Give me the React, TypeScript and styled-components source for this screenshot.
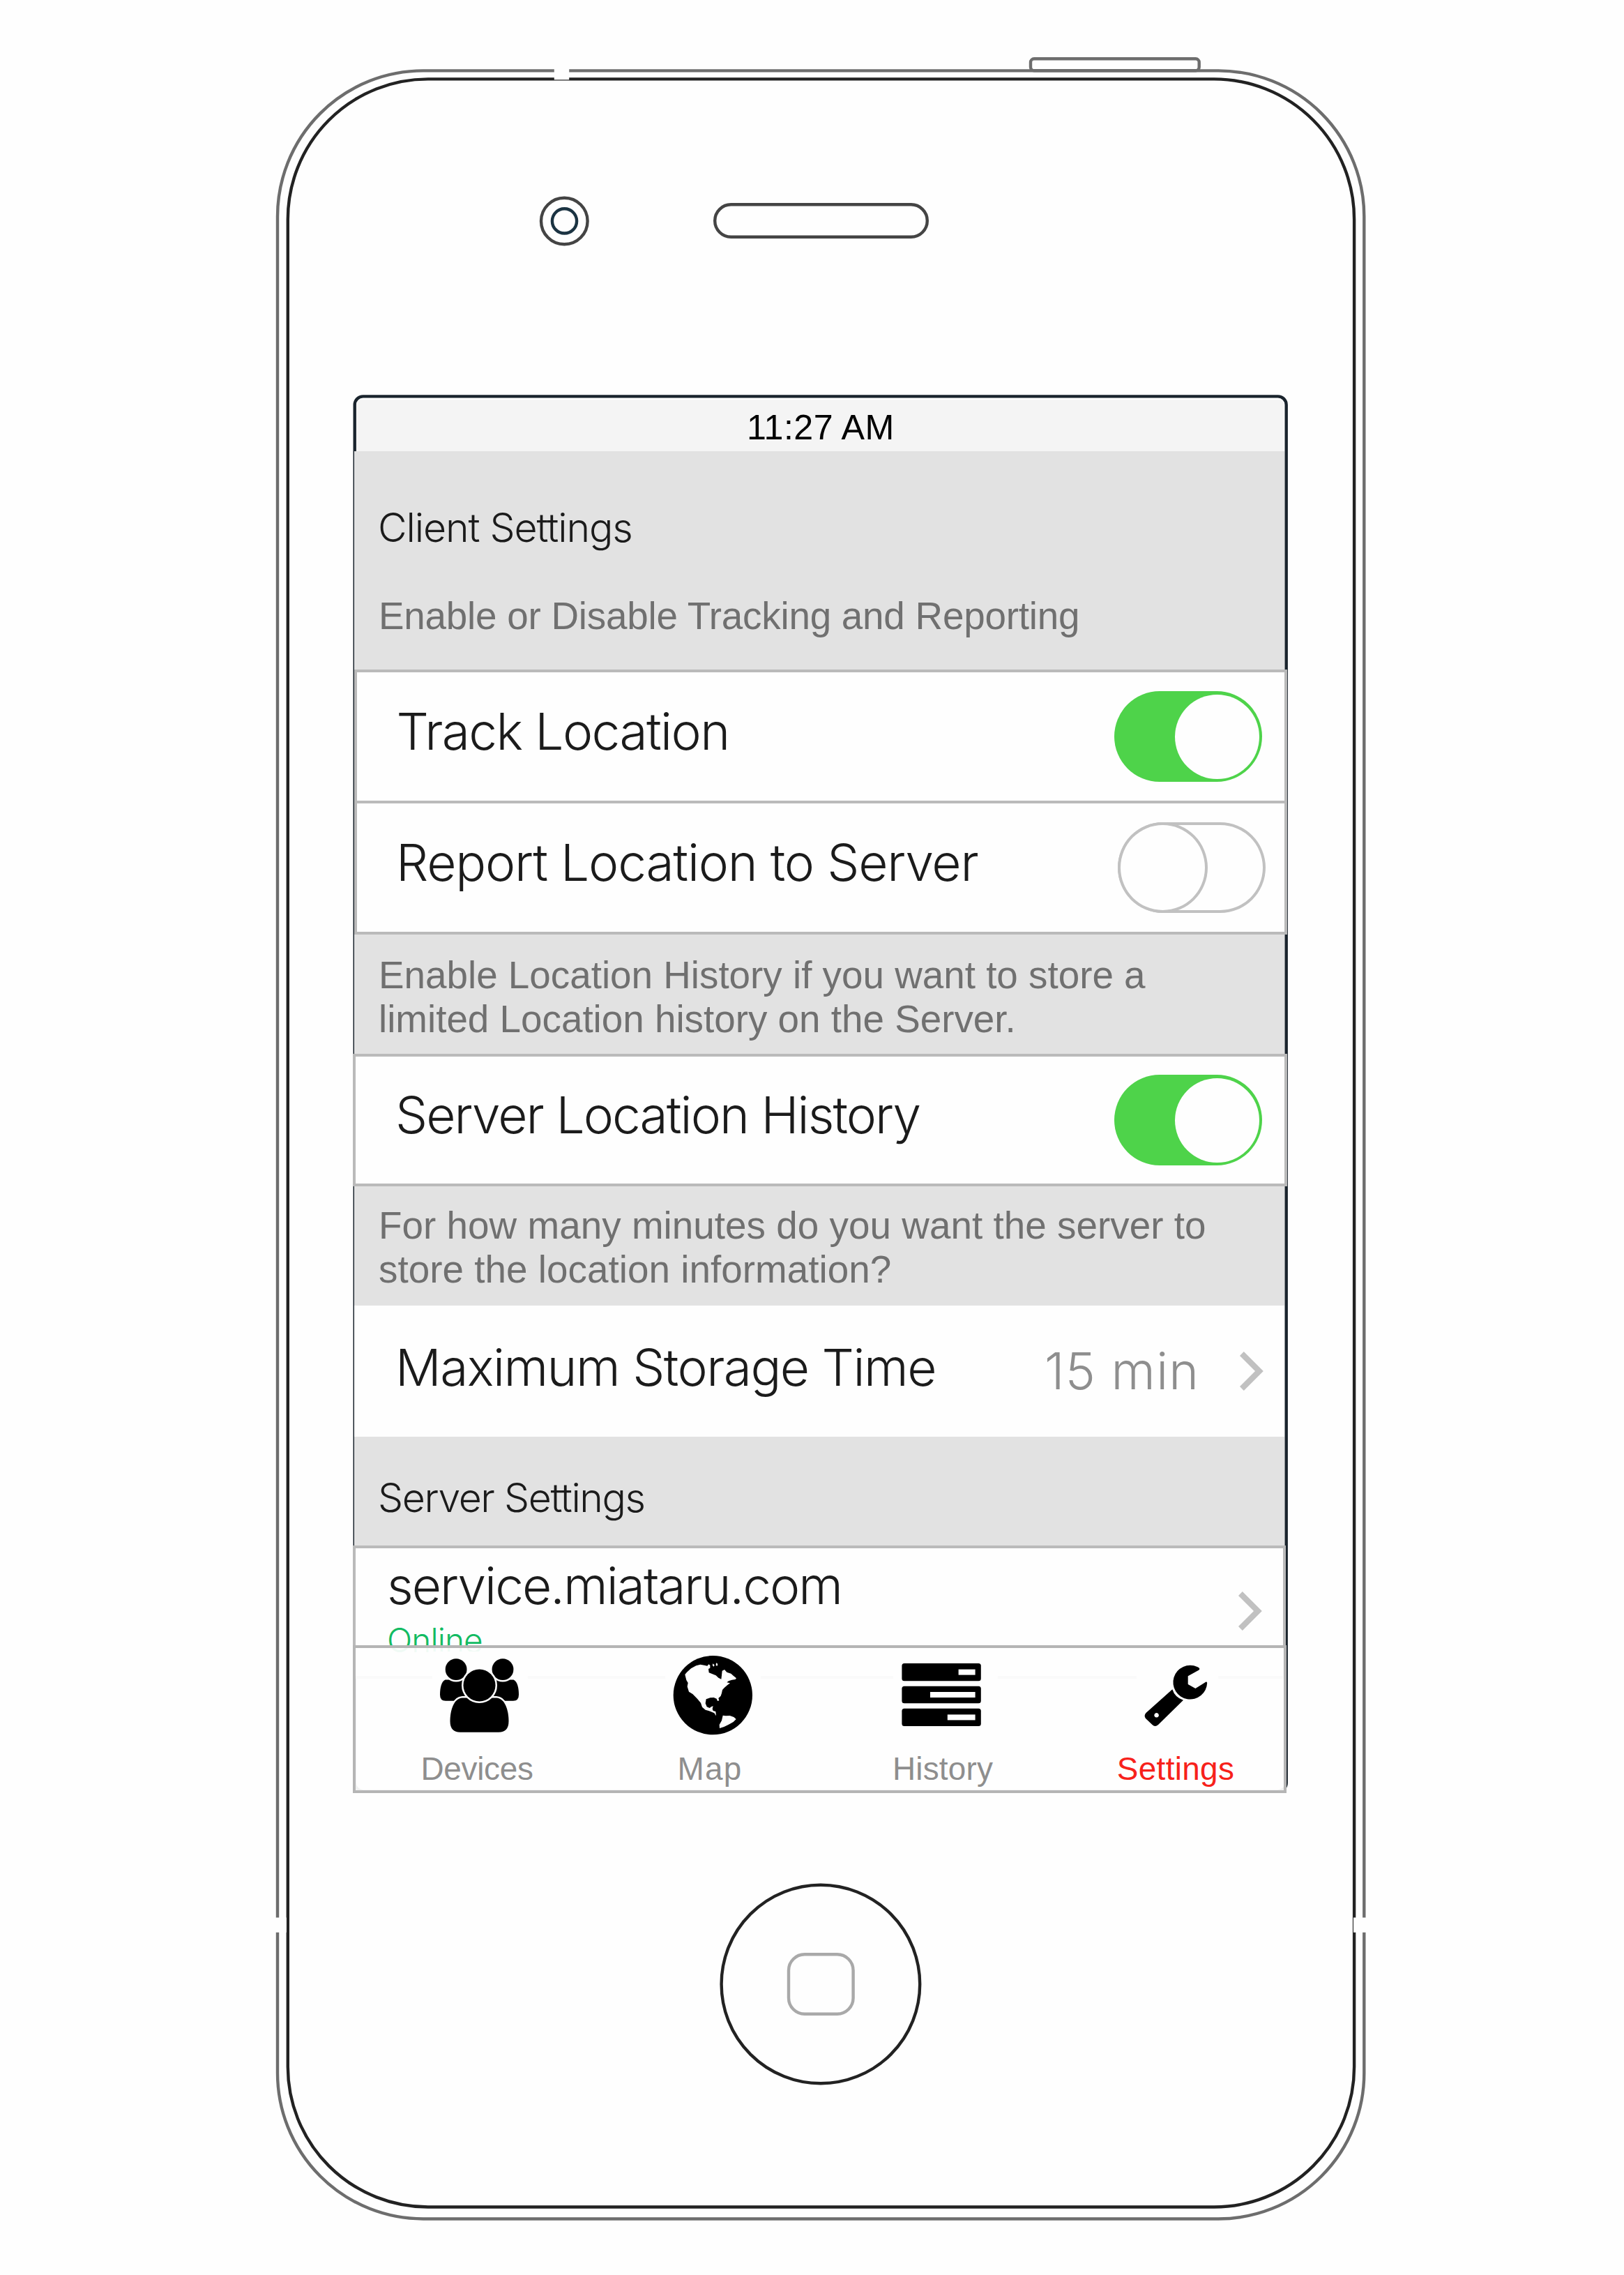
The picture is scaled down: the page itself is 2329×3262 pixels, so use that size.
import React from "react";
import styled, { createGlobalStyle } from "styled-components";

const line = "#bababa";
const sans = `"Liberation Sans", Arial, Helvetica, sans-serif`;
const light = `Inter, "Liberation Sans", sans-serif`;

const GlobalStyle = createGlobalStyle`
  * { box-sizing: border-box; }
  body { margin: 0; background: #fefefe; }
`;

const Stage = styled.main`
  display: grid;
  width: 2329px;
  height: 3262px;
  overflow: hidden;
  background: #fefefe;
`;

const ChassisDrawing = styled.svg`
  grid-area: 1 / 1;
  display: block;
  fill: none;
  stroke-width: 4.4;
`;

const Screen = styled.section`
  grid-area: 1 / 1;
  z-index: 1;
  display: flex;
  flex-direction: column;
  width: 1334px;
  height: 1998px;
  margin: 573px 0 0 508px;
`;

const StatusBar = styled.header`
  flex: none;
  height: 74px;
  margin: 0 1px 0 3px;
  padding-left: 560px;
  border-radius: 7px 7px 0 0;
  background: #f4f4f4;
  color: #000;
  font: 400 50.2px/81px ${sans};
  letter-spacing: 0.43px;
  white-space: pre;
`;

const Band = styled.div<{ $height: number; $top: number }>`
  flex: none;
  height: ${(p) => p.$height}px;
  padding: ${(p) => p.$top}px 0 0 34px;
  background: #e2e2e2;
`;

const Heading = styled.h2<{ $spacing: number }>`
  margin: 0;
  color: #1b1b1b;
  font: 300 57.2px/80px ${light};
  letter-spacing: ${(p) => p.$spacing}px;
`;

const Hint = styled.p<{ $gap?: number; $spacing?: number }>`
  margin: ${(p) => p.$gap ?? 0}px 0 0 1px;
  color: #707070;
  font: 400 54.8px/63.2px ${sans};
  letter-spacing: ${(p) => p.$spacing ?? 0}px;
  white-space: nowrap;
`;

const Group = styled.div<{ $left: number; $right: number }>`
  flex: none;
  display: flex;
  flex-direction: column;
  margin: 0 -${(p) => p.$right}px 0 -${(p) => p.$left}px;
  border: 4px solid ${line};
  background: #fefefe;
`;

const Divider = styled.div`
  height: 4px;
  background: ${line};
`;

const Row = styled.div<{ $height: number; $left: number; $right: number }>`
  flex: none;
  display: flex;
  align-items: center;
  justify-content: space-between;
  height: ${(p) => p.$height}px;
  padding: 0 ${(p) => p.$right}px 0 ${(p) => p.$left}px;
  background: #fefefe;
`;

const Label = styled.span<{ $spacing: number; $lift?: number }>`
  padding-bottom: ${(p) => p.$lift ?? 15}px;
  color: #1b1b1b;
  font: 300 73px/90px ${light};
  letter-spacing: ${(p) => p.$spacing}px;
  white-space: nowrap;
`;

const Value = styled.span`
  width: 280px;
  margin-left: auto;
  color: #8e8e8e;
  font: 300 72.6px/90px ${light};
  letter-spacing: 1.19px;
  white-space: nowrap;
`;

const Track = styled.span<{ $on: boolean }>`
  display: flex;
  justify-content: ${(p) => (p.$on ? "flex-end" : "flex-start")};
  width: 212px;
  height: 130px;
  padding: ${(p) => (p.$on ? "4.5px 4px" : "0")};
  border-radius: 65px;
  background: ${(p) => (p.$on ? "#4ed34a" : "#fefefe")};
  box-shadow: ${(p) => (p.$on ? "none" : "inset 0 0 0 4px #c1c1c1")};
`;

const Knob = styled.span<{ $on: boolean }>`
  width: ${(p) => (p.$on ? 121 : 129)}px;
  height: ${(p) => (p.$on ? 121 : 130)}px;
  border: ${(p) => (p.$on ? "none" : "4px solid #c1c1c1")};
  border-radius: 50%;
  background: #fefefe;
`;

const ServerRow = styled(Group)`
  flex-direction: row;
  justify-content: space-between;
  align-items: flex-start;
  height: 191px;
  margin-bottom: -48px;
  padding: 8.5px 30px 0 45px;
`;

const ServerText = styled.div`
  display: flex;
  flex-direction: column;
`;

const Online = styled.span`
  margin-top: 3px;
  color: #12bb62;
  font: 300 47.7px/60px ${light};
  letter-spacing: -0.89px;
`;

const ChevronDrawing = styled.svg<{ $top?: number }>`
  flex: none;
  display: block;
  width: 34px;
  height: 56px;
  margin-top: ${(p) => p.$top ?? 0}px;
  fill: #c1c1c1;
`;

const TabBar = styled.nav`
  z-index: 1;
  flex: none;
  display: grid;
  grid-template-columns: repeat(4, 334px);
  height: 212px;
  margin: 0 -3px 0 -2px;
  padding-left: 7px;
  border: 4px solid #b5b5b5;
  background: rgba(254, 254, 254, 0.94);
`;

const Tab = styled.div`
  display: flex;
  flex-direction: column;
  align-items: center;
  padding-top: 5px;
`;

const IconBox = styled.span<{ $width: number; $shift: number }>`
  display: block;
  width: ${(p) => p.$width}px;
  height: 122px;
  margin-left: ${(p) => p.$shift * 2}px;
  background: #fefefe;

  svg {
    display: block;
    width: 100%;
    height: 100%;
  }
`;

const TabLabel = styled.span<{ $active?: boolean; $spacing: number }>`
  margin-top: 15.8px;
  color: ${(p) => (p.$active ? "#f7211b" : "#8e8e8e")};
  font: 400 45.9px/60px ${sans};
  letter-spacing: ${(p) => p.$spacing}px;
`;

function Chassis() {
  return (
    <ChassisDrawing width="2329" height="3262" viewBox="0 0 2329 3262">
      <rect x="1478" y="84.3" width="241.7" height="17" rx="5" stroke="#6d6d6d" />
      <rect x="398" y="101.4" width="1558.3" height="3080.1" rx="209" stroke="#6d6d6d" />
      <rect x="412.8" y="113.4" width="1529.3" height="3051.1" rx="201" stroke="#222" />
      <g fill="#fefefe">
        <rect x="794.8" y="96" width="21.4" height="18.3" />
        <rect x="392" y="2749.5" width="18.8" height="21.3" />
        <rect x="1941" y="2749.5" width="20" height="21.3" />
      </g>
      <circle cx="809.3" cy="317" r="33.3" stroke="#444" />
      <circle cx="809.5" cy="316.9" r="17.6" stroke="#1b3342" />
      <rect x="1025.2" y="293.3" width="304.6" height="46.5" rx="23.2" stroke="#444" />
      <circle cx="1176.9" cy="2845" r="142.3" stroke="#222" />
      <rect x="1131" y="2802.3" width="92.6" height="85.4" rx="23" stroke="#a9a9a9" />
      <rect x="508.7" y="568.4" width="1336" height="2000" rx="12" stroke="#1a242d" />
    </ChassisDrawing>
  );
}

function Toggle({ on }: { on: boolean }) {
  return (
    <Track $on={on}>
      <Knob $on={on} />
    </Track>
  );
}

function Chevron({ top }: { top?: number }) {
  return (
    <ChevronDrawing $top={top} viewBox="0 0 34 56">
      <path d="M0 6 L5.8 0 L33.8 28 L5.8 56 L0 50 L22 28 Z" />
    </ChevronDrawing>
  );
}

function DevicesIcon() {
  return (
    <svg viewBox="-5 -2 137 122">
      <path d="M13.5 38.5 C8 41 6 50 6 60 Q6 68.7 14 68.7 H44 V38.5 Z" />
      <path d="M111.5 38.5 C117 41 119 50 119 60 Q119 68.7 111 68.7 H81 V38.5 Z" />
      <g stroke="#fefefe" strokeWidth="5" paintOrder="stroke">
        <ellipse cx="29.1" cy="23.7" rx="15.4" ry="15.4" />
        <ellipse cx="96" cy="23.7" rx="15.4" ry="15.4" />
        <path d="M38 64.5 C26 65 20.5 82 20.5 98 Q20.5 113.7 35 113.7 H90 Q104.5 113.7 104.5 98 C104.5 82 99 65 87 64.5 Z" />
        <circle cx="62.5" cy="46.4" r="23" />
      </g>
    </svg>
  );
}

function GlobeIcon() {
  return (
    <svg viewBox="-3 9 411 366">
      <circle cx="202" cy="197" r="170" />
      <g fill="#fefefe">
        <path d="M82 108 L90 98 L108 82 L130 70 L148 65 L165 68 L178 71 L184 64 L190 68 L190 80 L183 84 L185 100 L200 106 L215 112 L226 122 L238 128 L240 112 L242 92 L252 87 L262 98 L280 104 L290 113 L303 124 L299 129 L284 131 L270 136 L262 142 L276 145 L264 154 L252 164 L243 174 L240 188 L236 200 L226 210 L229 220 L222 222 L218 212 L206 207 L190 208 L173 214 L170 232 L176 247 L188 252 L196 246 L203 244 L200 256 L203 264 L214 267 L216 286 L208 274 L190 266 L170 260 L156 248 L150 230 L135 212 L115 192 L99 182 L92 160 L95 144 L88 132 Z" />
        <path d="M201 61 l8 6 l-3 7 l-5 -4 Z M216 58 l7 4 l-2 9 l-6 -2 Z" />
        <path d="M245 284 L258 286 L275 285 L292 291 L302 300 L290 312 L270 323 L250 333 L231 339 L230 324 L240 306 Z" />
      </g>
    </svg>
  );
}

function HistoryIcon() {
  return (
    <svg viewBox="0 0 150 122">
      <rect x="12.4" y="17" width="113.4" height="25.2" rx="3.5" />
      <rect x="12.4" y="49.7" width="113.4" height="24.5" rx="3.5" />
      <rect x="12.4" y="81.7" width="113.4" height="25.2" rx="3.5" />
      <g fill="#fefefe">
        <rect x="93.6" y="25.6" width="24" height="8" />
        <rect x="53" y="58" width="64.6" height="8" />
        <rect x="77.8" y="90.4" width="39.8" height="8" />
      </g>
    </svg>
  );
}

function WrenchIcon() {
  return (
    <svg viewBox="-11 -20 117 122">
      <path d="M62.7 15.3 L78.5 6.6 Q81 4 76 2 A24.4 24.4 0 1 0 90.2 25 Q89.5 22.5 87 24.5 L73.4 33 L62.7 27 Z" />
      <path
        fillRule="evenodd"
        d="M40.3 34.3 Q44 46 56 49.7 L20 85 Q15.5 89 11.5 85 L2 76 Q-1 72 2.5 68 Z M17.6 68 a3.3 3.3 0 1 0 0.01 0 Z"
      />
    </svg>
  );
}

export default function App() {
  return (
    <>
      <GlobalStyle />
      <Stage>
        <Chassis />
        <Screen>
          <StatusBar>11:27 AM</StatusBar>

          <Band $height={313} $top={69.5}>
            <Heading $spacing={-1.11}>Client Settings</Heading>
            <Hint $gap={55.7} $spacing={-0.23}>
              Enable or Disable Tracking and Reporting
            </Hint>
          </Band>

          <Group $left={0} $right={4}>
            <Row $height={184} $left={56.5} $right={32}>
              <Label $spacing={-1.62}>Track Location</Label>
              <Toggle on />
            </Row>
            <Divider />
            <Row $height={184} $left={56} $right={27}>
              <Label $spacing={-1.21}>Report Location to Server</Label>
              <Toggle on={false} />
            </Row>
          </Group>

          <Band $height={171} $top={27}>
            <Hint>
              Enable Location History if you want to store a
              <br />
              limited Location history on the Server.
            </Hint>
          </Band>

          <Group $left={2} $right={4}>
            <Row $height={182} $left={57} $right={32}>
              <Label $spacing={-1.95}>Server Location History</Label>
              <Toggle on />
            </Row>
          </Group>

          <Band $height={170.5} $top={25}>
            <Hint $spacing={0.04}>
              For how many minutes do you want the server to
              <br />
              store the location information?
            </Hint>
          </Band>

          <Row $height={188} $left={59} $right={30}>
            <Label $spacing={-1.54} $lift={9.6}>
              Maximum Storage Time
            </Label>
            <Value>15 min</Value>
            <Chevron />
          </Row>

          <Band $height={156.5} $top={48}>
            <Heading $spacing={-1.44}>Server Settings</Heading>
          </Band>

          <ServerRow $left={2} $right={2}>
            <ServerText>
              <Label $spacing={-1.97} $lift={0}>
                service.miataru.com
              </Label>
              <Online>Online</Online>
            </ServerText>
            <Chevron top={53} />
          </ServerRow>

          <TabBar>
            <Tab>
              <IconBox $width={137} $shift={4.5}>
                <DevicesIcon />
              </IconBox>
              <TabLabel $spacing={-0.29}>Devices</TabLabel>
            </Tab>
            <Tab>
              <IconBox $width={137} $shift={4.5}>
                <GlobeIcon />
              </IconBox>
              <TabLabel $spacing={1.2}>Map</TabLabel>
            </Tab>
            <Tab>
              <IconBox $width={150} $shift={4}>
                <HistoryIcon />
              </IconBox>
              <TabLabel $spacing={0.2}>History</TabLabel>
            </Tab>
            <Tab>
              <IconBox $width={117} $shift={2.5}>
                <WrenchIcon />
              </IconBox>
              <TabLabel $active $spacing={0.32}>
                Settings
              </TabLabel>
            </Tab>
          </TabBar>
        </Screen>
      </Stage>
    </>
  );
}
